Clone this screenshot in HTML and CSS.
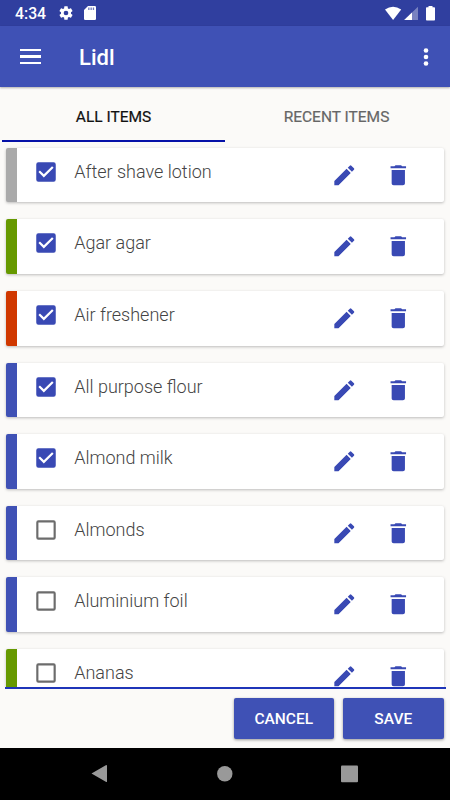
FILE: index.html
```html
<!DOCTYPE html>
<html lang="en">
<head>
<meta charset="utf-8">
<title>Lidl</title>
<link rel="stylesheet" href="styles.css">
</head>
<body>
<svg class="defs" aria-hidden="true">
  <symbol id="checked" viewBox="0 0 24 24"><path d="M19 3H5a2 2 0 0 0-2 2v14a2 2 0 0 0 2 2h14a2 2 0 0 0 2-2V5a2 2 0 0 0-2-2zm-9 14l-5-5 1.41-1.41L10 14.17l7.59-7.59L19 8l-9 9z"/></symbol>
  <symbol id="unchecked" viewBox="0 0 24 24"><path d="M19 5v14H5V5h14m0-2H5a2 2 0 0 0-2 2v14a2 2 0 0 0 2 2h14a2 2 0 0 0 2-2V5a2 2 0 0 0-2-2z"/></symbol>
  <symbol id="edit" viewBox="0 0 24 24"><path d="M3 17.25V21h3.75L17.81 9.94l-3.75-3.75L3 17.25zM20.71 7.04a1 1 0 0 0 0-1.41l-2.34-2.34a1 1 0 0 0-1.41 0l-1.83 1.83 3.75 3.75 1.83-1.83z"/></symbol>
  <symbol id="trash" viewBox="0 0 24 24"><path d="M6 19.200c0 1 .8 1.800 1.800 1.800h8.400c1 0 1.800-.8 1.800-1.800V7.200H6v12zM19 3.900h-3.500l-1-1h-5l-1 1H5v1.800h14V3.900z"/></symbol>
</svg>
<div class="screen">
  <div class="status">
    <span class="clock">4:34</span>
    <svg class="gear" viewBox="0 0 24 24"><path d="M19.43 12.98c.04-.32.07-.64.07-.98s-.03-.66-.07-.98l2.11-1.65c.19-.15.24-.42.12-.64l-2-3.46c-.12-.22-.39-.3-.61-.22l-2.49 1c-.52-.4-1.08-.73-1.69-.98l-.38-2.65A.49.49 0 0 0 14 2h-4c-.25 0-.46.18-.49.42l-.38 2.65c-.61.25-1.17.59-1.69.98l-2.49-1c-.23-.09-.49 0-.61.22l-2 3.46c-.13.22-.07.49.12.64l2.11 1.65c-.04.32-.07.65-.07.98s.03.66.07.98l-2.11 1.65c-.19.15-.24.42-.12.64l2 3.46c.12.22.39.3.61.22l2.49-1c.52.4 1.08.73 1.69.98l.38 2.65c.03.24.24.42.49.42h4c.25 0 .46-.18.49-.42l.38-2.65c.61-.25 1.17-.59 1.69-.98l2.49 1c.23.09.49 0 .61-.22l2-3.46c.12-.22.07-.49-.12-.64l-2.11-1.65zM12 15.500a3.500 3.500 0 1 1 0-7 3.500 3.500 0 0 1 0 7z"/></svg>
    <svg class="sdcard" viewBox="0 0 12 14"><path d="M4 0h6.800Q12 0 12 1.200v11.600Q12 14 10.800 14H1.200Q0 14 0 12.800V4z"/><path class="slots" d="M4.200 1.500h1.300v2.500H4.200zM6.500 1.500h1.300v2.500H6.500zM8.800 1.500h1.300v2.500H8.800z"/></svg>
    <svg class="signals" viewBox="0 0 52 16"><path d="M1 3.600Q9 -2 17.200 3.600L9.100 14z"/><path class="dim" d="M34 .8V14H20.200z"/><path d="M28 6.500V14h-7.800z"/><path d="M44.500 0h4v1.300h1.700q.8 0 .8.800v11.600q0 .8-.8.800h-7.400q-.8 0-.8-.8V2.100q0-.8.8-.8h1.700z"/></svg>
  </div>
  <header class="appbar">
    <div class="burger"><i></i><i></i><i></i></div>
    <h1>Lidl</h1>
    <svg class="more" viewBox="0 0 6 20"><circle cx="3" cy="3.500" r="2.300"/><circle cx="3" cy="10" r="2.300"/><circle cx="3" cy="16.500" r="2.300"/></svg>
  </header>
  <nav class="tabs">
    <div class="tab active">ALL ITEMS</div>
    <div class="tab">RECENT ITEMS</div>
  </nav>
  <main class="list">
    <div class="card gray"><svg class="box on"><use href="#checked"/></svg><span>After shave lotion</span><svg class="act edit"><use href="#edit"/></svg><svg class="act"><use href="#trash"/></svg></div>
    <div class="card green"><svg class="box on"><use href="#checked"/></svg><span>Agar agar</span><svg class="act edit"><use href="#edit"/></svg><svg class="act"><use href="#trash"/></svg></div>
    <div class="card red"><svg class="box on"><use href="#checked"/></svg><span>Air freshener</span><svg class="act edit"><use href="#edit"/></svg><svg class="act"><use href="#trash"/></svg></div>
    <div class="card blue"><svg class="box on"><use href="#checked"/></svg><span>All purpose flour</span><svg class="act edit"><use href="#edit"/></svg><svg class="act"><use href="#trash"/></svg></div>
    <div class="card blue"><svg class="box on"><use href="#checked"/></svg><span>Almond milk</span><svg class="act edit"><use href="#edit"/></svg><svg class="act"><use href="#trash"/></svg></div>
    <div class="card blue"><svg class="box"><use href="#unchecked"/></svg><span>Almonds</span><svg class="act edit"><use href="#edit"/></svg><svg class="act"><use href="#trash"/></svg></div>
    <div class="card blue"><svg class="box"><use href="#unchecked"/></svg><span>Aluminium foil</span><svg class="act edit"><use href="#edit"/></svg><svg class="act"><use href="#trash"/></svg></div>
    <div class="card green"><svg class="box"><use href="#unchecked"/></svg><span>Ananas</span><svg class="act edit"><use href="#edit"/></svg><svg class="act"><use href="#trash"/></svg></div>
  </main>
  <footer class="actions">
    <button>CANCEL</button>
    <button>SAVE</button>
  </footer>
  <div class="navbar">
    <svg viewBox="0 0 450 52"><path d="M91.500 25.500L105.800 17.200Q107 16.700 107 18v15.200Q107 34.500 105.800 33.800z"/><circle cx="224.800" cy="25.700" r="7.700"/><rect x="341" y="17.400" width="17" height="16.800" rx="1"/></svg>
  </div>
</div>
</body>
</html>
```
FILE: styles.css
```css
* { box-sizing: border-box; }
body { margin: 0; font-family: Roboto, sans-serif; background: #fbfaf8; }
.defs { position: absolute; width: 0; height: 0; }
svg { display: block; flex: none; fill: #fff; }
.screen { width: 450px; height: 800px; display: flex; flex-direction: column; overflow: hidden; }
.status { height: 26px; flex: none; background: #303f9f; display: flex; align-items: center; padding: 0 14px 0 15px; color: #fff; }
.clock { width: 42.500px; font-size: 15.800px; font-weight: 500; line-height: 26px; padding-top: 2px; }
.gear { width: 16px; height: 16px; }
.sdcard { width: 12px; height: 14px; margin-left: 10.500px; }
.slots { fill: #303f9f; opacity: .7; }
.signals { width: 52px; height: 16px; margin-left: auto; margin-top: 2px; }
.dim { opacity: .35; }
.appbar { height: 61px; flex: none; background: #3f51b5; display: flex; align-items: center; padding: 0 21px 0 20px; box-shadow: 0 1px 2px rgba(0,0,0,.3); color: #fff; }
.burger { width: 21px; display: grid; gap: 4px; }
.burger i { height: 2.400px; background: #fff; }
h1 { margin: 2px 0 0 38px; font-size: 22px; font-weight: 500; line-height: 30px; }
.more { width: 6px; height: 20px; margin-left: auto; }
.tabs { height: 55px; flex: none; display: flex; padding: 0 2px; }
.tab { width: 223px; text-align: center; font-size: 15.500px; line-height: 61px; height: 55px; color: #666; -webkit-text-stroke: .2px; }
.active { color: #111; border-bottom: 2px solid #0612a8; }
.list { height: 545px; flex: none; overflow: hidden; padding: 5.900px 6px 0; display: flex; flex-direction: column; gap: 17px; }
.card { height: 54.600px; flex: none; display: flex; align-items: flex-start; background: #fff; border-left: 11px solid; border-radius: 2px; box-shadow: 0 1px 3px rgba(0,0,0,.25); padding: 0 32px 0 15.700px; }
.gray { border-color: #aaa; }
.green { border-color: #690; }
.red { border-color: #d03800; }
.blue { border-color: #3f51b5; }
.box { width: 26px; height: 26px; margin-top: 11px; fill: #6c6c6c; }
.on { fill: #3949b4; }
.card span { margin-left: 15.500px; font-size: 18px; font-weight: 300; line-height: 26px; padding-top: 11px; color: #444; }
.act { width: 26.600px; height: 26.600px; margin-top: 14px; fill: #3949b4; }
.edit { margin-left: auto; margin-right: 28px; }
.actions { height: 61px; flex: none; margin: 0 4.500px 0 5px; border-top: 2px solid #1e35b8; display: flex; justify-content: flex-end; gap: 9px; padding: 8.500px 2px 0; }
button { width: 100.500px; height: 41.500px; border: 0; border-radius: 2px; background: #3f51b5; color: #fff; font: 500 15.500px Roboto, sans-serif; padding: 1px 0 0; box-shadow: 0 1px 3px rgba(0,0,0,.4); }
.navbar { height: 52px; flex: none; background: #000; }
.navbar svg { width: 450px; height: 52px; fill: #999; }
```
